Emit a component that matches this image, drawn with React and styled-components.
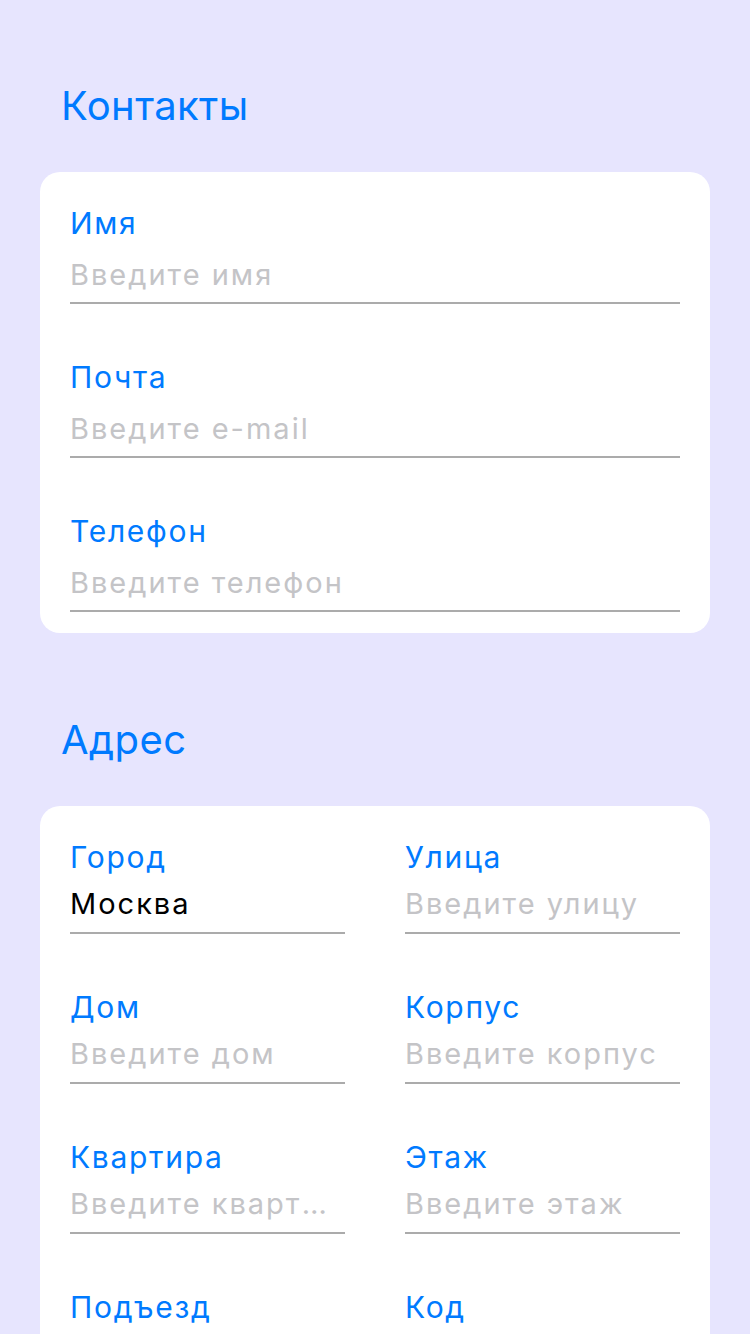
import styled, { createGlobalStyle } from 'styled-components';

const GlobalStyle = createGlobalStyle`
	html,
	body {
		margin: 0;
		padding: 0;
		background-color: #e7e5fe;
		font-family: Inter, "Noto Sans", "Liberation Sans", sans-serif;
		-webkit-font-smoothing: antialiased;
	}
`;

const Page = styled.main`
	display: flex;
	flex-direction: column;
	gap: 83px;
	min-height: 1334px;
	padding: 82px 40px 0;
	box-sizing: border-box;
	overflow: hidden;
`;

const Section = styled.section`
	display: flex;
	flex-direction: column;
`;

const SectionTitle = styled.h2`
	margin: 0 0 42px;
	padding-left: 21px;
	font-size: 40px;
	line-height: 48px;
	font-weight: 400;
	letter-spacing: 0.4px;
	color: #007aff;
`;

const Card = styled.div`
	display: grid;
	grid-template-columns: ${({ $cols }) => `repeat(${$cols}, 1fr)`};
	column-gap: 60px;
	row-gap: ${({ $rowGap }) => $rowGap}px;
	padding: 33px 30px 21px;
	background-color: #fff;
	border-radius: 20px;
`;

const Field = styled.label`
	display: flex;
	flex-direction: column;
	min-width: 0;
`;

const Label = styled.span`
	font-size: 30px;
	line-height: 36px;
	letter-spacing: 1.7px;
	color: #007aff;
`;

const Value = styled.span`
	padding: ${({ $tight }) => ($tight ? '9px 0 8px' : '14px 0 7px')};
	font-size: 29px;
	line-height: 40px;
	letter-spacing: 2px;
	color: ${({ $empty }) => ($empty ? '#c4c4c7' : '#000')};
	white-space: nowrap;
	overflow: hidden;
	text-overflow: ellipsis;
	border-bottom: 2px solid #ababab;
`;

const contacts = [
	{ label: 'Имя', placeholder: 'Введите имя' },
	{ label: 'Почта', placeholder: 'Введите e-mail' },
	{ label: 'Телефон', placeholder: 'Введите телефон' },
];

const address = [
	{ label: 'Город', placeholder: 'Введите город', value: 'Москва' },
	{ label: 'Улица', placeholder: 'Введите улицу' },
	{ label: 'Дом', placeholder: 'Введите дом' },
	{ label: 'Корпус', placeholder: 'Введите корпус' },
	{ label: 'Квартира', placeholder: 'Введите квартиру' },
	{ label: 'Этаж', placeholder: 'Введите этаж' },
	{ label: 'Подъезд', placeholder: 'Введите подъезд' },
	{ label: 'Код', placeholder: 'Введите код' },
];

const FormField = ({ label, placeholder, value, tight }) => (
	<Field>
		<Label>{label}</Label>
		<Value $empty={!value} $tight={tight}>
			{value || placeholder}
		</Value>
	</Field>
);

const App = () => {
	return (
		<>
			<GlobalStyle />
			<Page>
				<Section>
					<SectionTitle>Контакты</SectionTitle>
					<Card $cols={1} $rowGap={55}>
						{contacts.map((f) => (
							<FormField key={f.label} {...f} />
						))}
					</Card>
				</Section>
				<Section>
					<SectionTitle>Адрес</SectionTitle>
					<Card $cols={2} $rowGap={55}>
						{address.map((f) => (
							<FormField key={f.label} {...f} tight />
						))}
					</Card>
				</Section>
			</Page>
		</>
	);
};

export default App;
